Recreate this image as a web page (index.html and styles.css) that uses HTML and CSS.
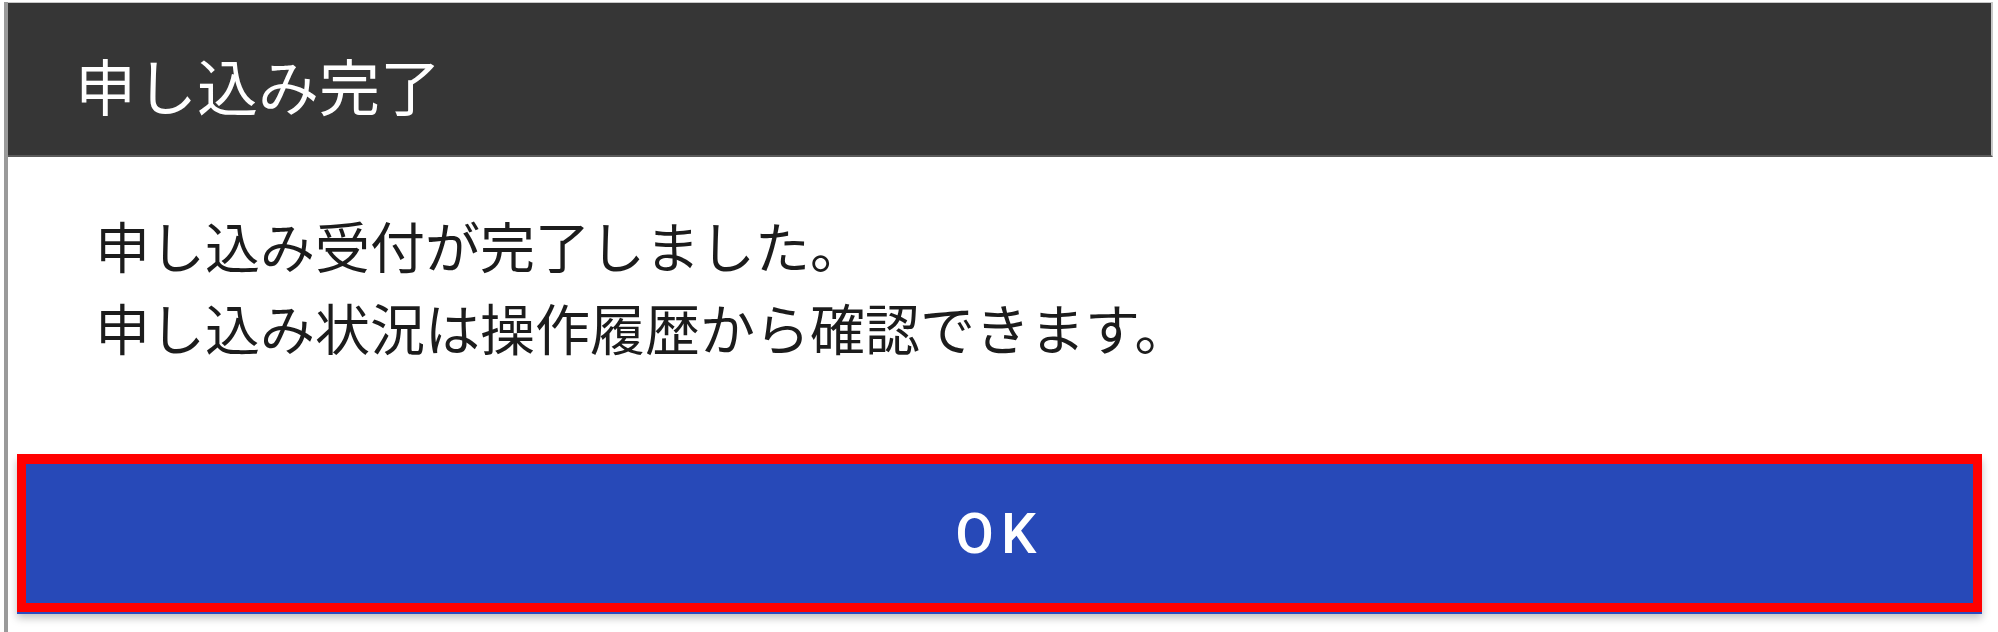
FILE: index.html
```html
<!DOCTYPE html>
<html lang="ja">
<head>
  <meta charset="UTF-8">
  <title>申し込み完了</title>
  <link rel="stylesheet" href="styles.css">
</head>
<body>
  <div class="dialog">
    <div class="dialog-title">申し込み完了</div>
    <div class="dialog-body">
      <p>申し込み受付が完了しました。</p>
      <p>申し込み状況は操作履歴から確認できます。</p>
    </div>
    <div class="dialog-actions">
      <button class="ok-btn">OK</button>
    </div>
  </div>
</body>
</html>
```

FILE: styles.css
```css
html, body {
  margin: 0;
  background: #fff;
}
body {
  font-family: "Noto Sans CJK JP", "Noto Sans", sans-serif;
  padding: 2px 2px 0 4px;
  height: 630px;
  overflow: hidden;
}
.dialog {
  height: 100%;
  border-left: 4px solid #9a9a9a;
  background: #fff;
}
.dialog-title {
  height: 155px;
  margin-right: 3px;
  padding-left: 67px;
  display: flex;
  align-items: center;
  background-color: #363636;
  border-top: 1px solid #c8c8c8;
  border-right: 2px solid #c8c8c8;
  border-bottom: 2px solid #5a5a5a;
  color: #fff;
  font-size: 61px;
  line-height: 1;
  padding-top: 10px;
  box-sizing: border-box;
}
.dialog-body {
  padding: 46px 0 0 87px;
  height: 297px;
  box-sizing: border-box;
}
.dialog-body p {
  margin: 0;
  font-size: 55px;
  line-height: 82px;
  color: #1c1c1c;
}
.dialog-actions {
  padding: 0 0 0 9px;
}
.ok-btn {
  display: block;
  width: 1965px;
  height: 158px;
  border: 9px solid #ff0000;
  border-top-width: 10px;
  background-color: #2749b8;
  color: #fff;
  font-family: Roboto, "Noto Sans", sans-serif;
  font-weight: 500;
  font-size: 56px;
  letter-spacing: 0.13em;
  padding: 0;
  cursor: pointer;
  box-shadow: 0 2px 0 #2a4cc0, 0 6px 8px rgba(0,0,0,0.25);
}
```
